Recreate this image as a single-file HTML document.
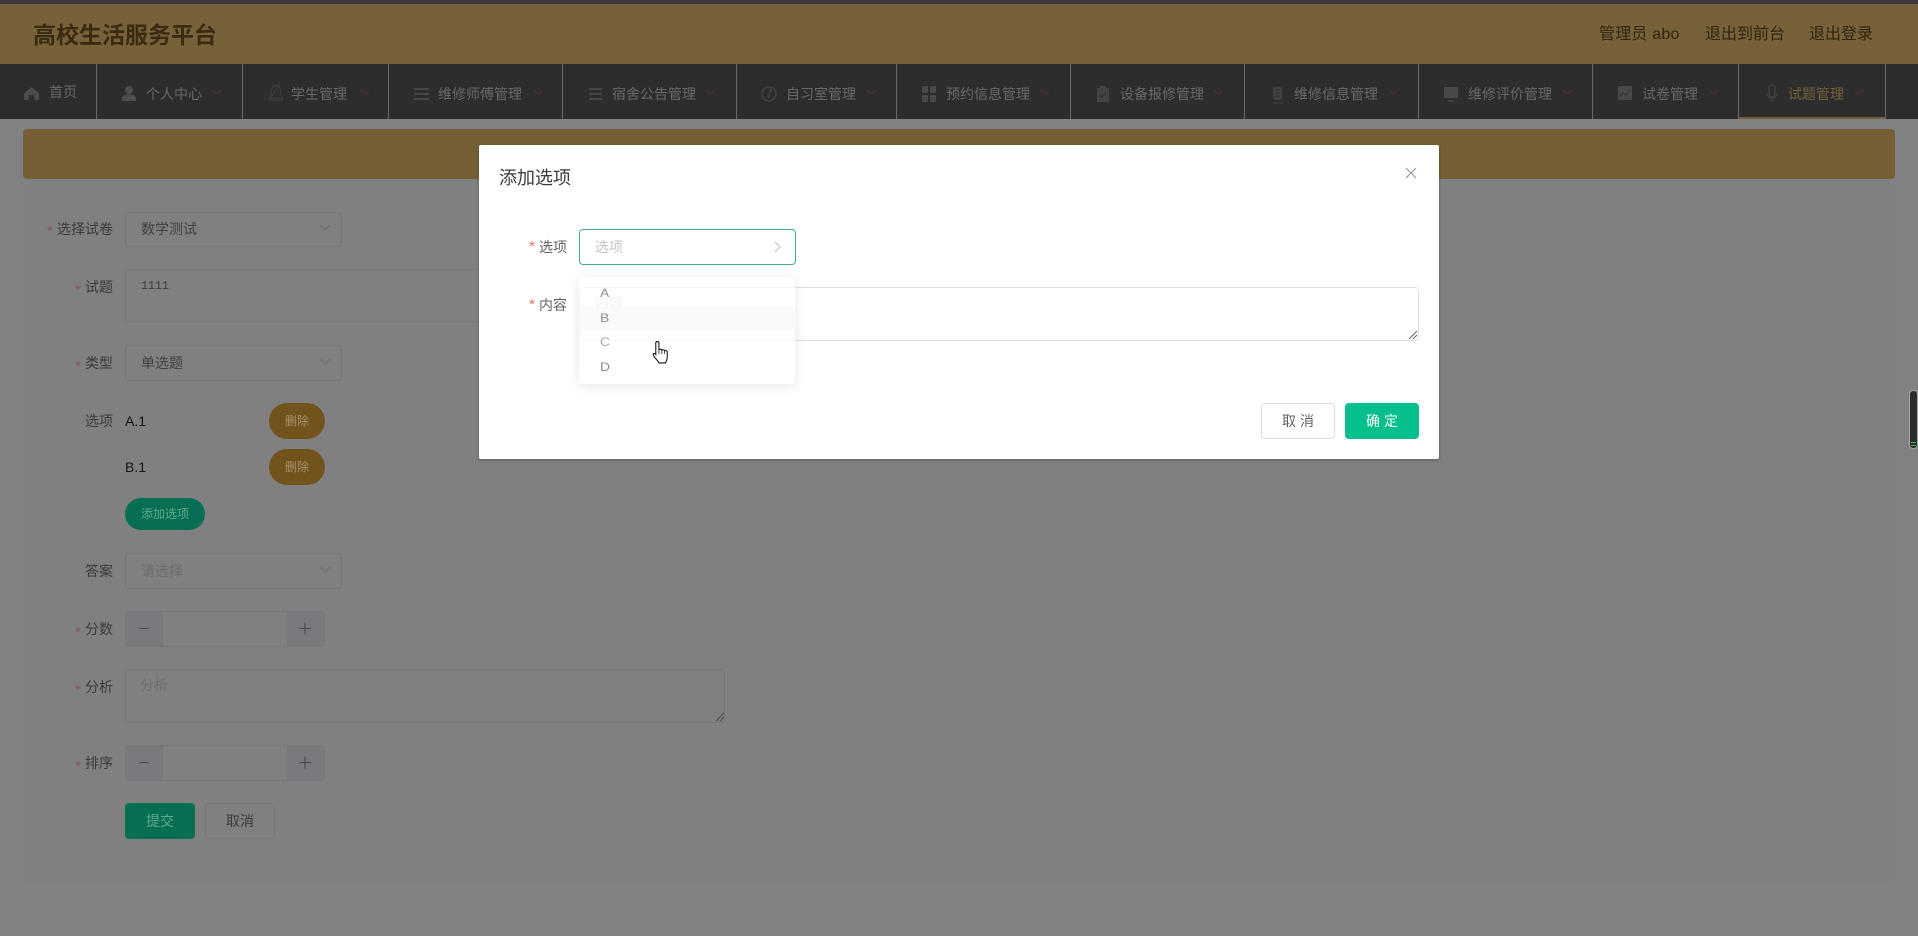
<!DOCTYPE html>
<html lang="zh">
<head>
<meta charset="utf-8">
<title>高校生活服务平台</title>
<style>
html,body{margin:0;padding:0;width:1918px;height:936px;overflow:hidden;background:#7f8182;}
body{position:relative;font-family:"Liberation Sans","Noto Sans CJK SC",sans-serif;font-size:14px;}
.a{position:absolute;box-sizing:border-box;}
.t{position:absolute;white-space:nowrap;line-height:20px;height:20px;}
.nt{color:#696969;font-size:14px;top:84px;}
.dv{position:absolute;top:64px;height:55px;width:1px;background:#696969;}
.lb{color:#3a3a3a;font-size:14px;text-align:right;width:100px;left:13px;}
.st{color:#8a5657;font-size:15px;}
.bx{position:absolute;box-sizing:border-box;border:1px solid #757779;border-radius:4px;}
.pad{position:absolute;box-sizing:border-box;background:#787a7d;}
</style>
</head>
<body>
<!-- top strip + header -->
<div class="a" style="left:0;top:0;width:1918px;height:4px;background:#3b383b;"></div>
<div class="a" style="left:0;top:4px;width:1918px;height:60px;background:#766138;"></div>
<div class="t" style="left:33px;top:20px;height:30px;line-height:30px;font-size:23px;font-weight:bold;color:#3a2c12;">高校生活服务平台</div>
<div class="t" style="left:1599px;top:25px;font-size:16px;color:#2f2511;letter-spacing:.2px;">管理员 abo</div>
<div class="t" style="left:1705px;top:25px;font-size:16px;color:#2f2511;">退出到前台</div>
<div class="t" style="left:1809px;top:25px;font-size:16px;color:#2f2511;">退出登录</div>

<!-- nav -->
<div class="a" style="left:0;top:64px;width:1918px;height:55px;background:#2e2d2e;"></div>
<div class="dv" style="left:96px"></div><div class="dv" style="left:242px"></div><div class="dv" style="left:388px"></div><div class="dv" style="left:562px"></div><div class="dv" style="left:736px"></div><div class="dv" style="left:896px"></div><div class="dv" style="left:1070px"></div><div class="dv" style="left:1244px"></div><div class="dv" style="left:1418px"></div><div class="dv" style="left:1592px"></div><div class="dv" style="left:1738px"></div><div class="dv" style="left:1885px"></div>
<div class="a" style="left:1738px;top:117px;width:147px;height:2px;background:#75603a;"></div>

<div class="t nt" style="left:49px;top:82px;">首页</div>
<div class="t nt" style="left:146px;">个人中心</div>
<div class="t nt" style="left:291px;">学生管理</div>
<div class="t nt" style="left:438px;">维修师傅管理</div>
<div class="t nt" style="left:612px;">宿舍公告管理</div>
<div class="t nt" style="left:786px;">自习室管理</div>
<div class="t nt" style="left:946px;">预约信息管理</div>
<div class="t nt" style="left:1120px;">设备报修管理</div>
<div class="t nt" style="left:1294px;">维修信息管理</div>
<div class="t nt" style="left:1468px;">维修评价管理</div>
<div class="t nt" style="left:1642px;">试卷管理</div>
<div class="t nt" style="left:1788px;color:#75603a;">试题管理</div>

<svg class="a" style="left:0;top:64px" width="1918" height="55" viewBox="0 64 1918 55">
  <g fill="none" stroke="#4f2c35" stroke-width="1.2">
    <path d="M212 90l4.500 4 4.500-4M360 90l4.500 4 4.500-4M534 90l4.500 4 4.500-4M706 90l4.500 4 4.500-4M867 90l4.500 4 4.500-4M1040 90l4.500 4 4.500-4M1214 90l4.500 4 4.500-4M1389 90l4.500 4 4.500-4M1563 90l4.500 4 4.500-4M1709 90l4.500 4 4.500-4M1855 90l4.500 4 4.500-4"/>
  </g>
  <!-- home -->
  <path d="M24 93.500l7.500-6.500 7.500 6.500v6.500h-5v-5h-5v5h-5z" fill="#4b4b4d"/>
  <!-- user -->
  <circle cx="129" cy="90" r="4" fill="#4d4d4e"/><path d="M122 101v-2.500c0-3 3-4 7-4s7 1 7 4v2.500z" fill="#4d4d4e"/>
  <!-- bell slash -->
  <g fill="none" stroke="#3f3f40" stroke-width="1"><path d="M269 98c3-3 2-5 3-9 1-3 3-4 4-4s3 1 4 4c1 4 0 6 3 9zM268 100h15M270 99l10-15"/></g>
  <!-- lists -->
  <g fill="none" stroke="#464647" stroke-width="2"><path d="M414 89h15M414 94h15M414 99h15M589 89h13M589 94h13M589 99h13"/></g>
  <!-- compass -->
  <circle cx="769" cy="94" r="7" fill="none" stroke="#454546" stroke-width="1.3"/><path d="M771 89l-3 9" stroke="#454546" stroke-width="1.4"/>
  <!-- grid -->
  <g fill="#48484a"><rect x="922" y="86" width="6" height="7"/><rect x="930" y="86" width="6" height="7"/><rect x="922" y="95" width="6" height="7"/><rect x="930" y="95" width="6" height="7"/></g>
  <!-- clipboard -->
  <path d="M1097 88h3v-2h6v2h3v14h-12z" fill="#434344"/><path d="M1100 95l2 2 4-4" fill="none" stroke="#2f2e2f" stroke-width="1.2"/>
  <!-- device -->
  <rect x="1273" y="87" width="9" height="13" rx="2" fill="#414142"/><path d="M1275 90h5M1275 93h5M1275 96h5" stroke="#2f2e2f"/><path d="M1273 103h9" stroke="#414142"/>
  <!-- monitor -->
  <rect x="1444" y="87" width="14" height="11" fill="#48484a"/><path d="M1448 101h6" stroke="#48484a" stroke-width="1.5"/>
  <!-- chart -->
  <rect x="1618" y="86" width="14" height="14" fill="#48484a"/><path d="M1620 96l3-3 3 2 4-4" fill="none" stroke="#2f2e2f"/>
  <!-- mic -->
  <rect x="1769" y="85" width="6" height="12" rx="3" fill="none" stroke="#464647" stroke-width="1.2"/><path d="M1767 93c0 7 10 7 10 0M1772 99v3" fill="none" stroke="#464647"/>
</svg>

<!-- page body -->
<div class="a" style="left:23px;top:129px;width:1872px;height:50px;background:#756036;border-radius:4px;"></div>
<div class="a" style="left:23px;top:186px;width:1872px;height:697px;background:#808080;"></div>

<!-- left form -->
<div class="t st" style="left:47px;top:222px;">*</div><div class="t lb" style="top:219px;">选择试卷</div>
<div class="bx" style="left:125px;top:212px;width:217px;height:35px;"></div>
<div class="t" style="left:141px;top:219px;color:#404040;">数学测试</div>

<div class="t st" style="left:75px;top:281px;color:#8a5657;">*</div><div class="t lb" style="top:277px;">试题</div>
<div class="bx" style="left:125px;top:269px;width:600px;height:53px;"></div>
<div class="t" style="left:141px;top:276px;color:#3f3f3f;font-family:'Liberation Mono',monospace;font-size:12px;letter-spacing:-.3px;">1111</div>

<div class="t st" style="left:75px;top:357px;">*</div><div class="t lb" style="top:353px;">类型</div>
<div class="bx" style="left:125px;top:345px;width:217px;height:36px;"></div>
<div class="t" style="left:141px;top:353px;color:#404040;">单选题</div>

<div class="t lb" style="top:411px;">选项</div>
<div class="t" style="left:125px;top:411px;color:#151515;">A.1</div>
<div class="a" style="left:269px;top:403px;width:56px;height:36px;border-radius:18px;background:#72531c;"></div>
<div class="t" style="left:285px;top:411px;color:#a3926f;font-size:12px;">删除</div>
<div class="t" style="left:125px;top:457px;color:#151515;">B.1</div>
<div class="a" style="left:269px;top:449px;width:56px;height:36px;border-radius:18px;background:#72531c;"></div>
<div class="t" style="left:285px;top:457px;color:#a3926f;font-size:12px;">删除</div>
<div class="a" style="left:125px;top:498px;width:80px;height:32px;border-radius:16px;background:#066f53;"></div>
<div class="t" style="left:141px;top:504px;color:#62a892;font-size:12px;">添加选项</div>

<div class="t lb" style="top:561px;">答案</div>
<div class="bx" style="left:125px;top:553px;width:217px;height:36px;"></div>
<div class="t" style="left:141px;top:561px;color:#6b6d6f;">请选择</div>

<div class="t st" style="left:75px;top:623px;">*</div><div class="t lb" style="top:619px;">分数</div>
<div class="bx" style="left:125px;top:611px;width:200px;height:36px;overflow:hidden;">
  <div class="pad" style="left:0;top:0;width:37px;height:34px;border-right:1px solid #757779;"></div>
  <div class="pad" style="right:0;top:0;width:37px;height:34px;border-left:1px solid #757779;"></div>
</div>

<div class="t st" style="left:75px;top:681px;">*</div><div class="t lb" style="top:677px;">分析</div>
<div class="bx" style="left:125px;top:669px;width:600px;height:54px;"></div>
<div class="t" style="left:140px;top:675px;color:#6b6d6f;">分析</div>

<div class="t st" style="left:75px;top:757px;">*</div><div class="t lb" style="top:753px;">排序</div>
<div class="bx" style="left:125px;top:745px;width:200px;height:36px;overflow:hidden;">
  <div class="pad" style="left:0;top:0;width:37px;height:34px;border-right:1px solid #757779;"></div>
  <div class="pad" style="right:0;top:0;width:37px;height:34px;border-left:1px solid #757779;"></div>
</div>

<div class="a" style="left:125px;top:803px;width:70px;height:36px;border-radius:4px;background:#066f53;"></div>
<div class="t" style="left:146px;top:811px;color:#62a892;">提交</div>
<div class="bx" style="left:205px;top:803px;width:70px;height:36px;"></div>
<div class="t" style="left:226px;top:811px;color:#3a3a3a;">取消</div>

<svg class="a" style="left:0;top:0" width="400" height="800" viewBox="0 0 400 800">
  <g fill="none" stroke="#6c6e70" stroke-width="1">
    <path d="M320 225l5 5 5-5M320 359l5 5 5-5M320 567l5 5 5-5"/>
  </g>
  <g fill="none" stroke="#4a4b4d" stroke-width="1.1">
    <path d="M139 628.500h10M299 628.500h12M305 622.500v12M139 762.500h10M299 762.500h12M305 756.500v12"/>
  </g>
</svg>
<svg class="a" style="left:715px;top:712px" width="10" height="10" viewBox="0 0 10 10"><path d="M1 9l8-8M5 9l4-4" stroke="#4a4a4a" fill="none"/></svg>

<!-- scrollbar -->
<div class="a" style="left:1909px;top:390px;width:9px;height:59px;background:#2b2b2b;border:1px solid #a5a5a5;border-radius:4px;"></div>
<div class="a" style="left:1911px;top:442px;width:5px;height:1px;background:#3fbf5f;"></div>
<div class="a" style="left:1911px;top:445px;width:5px;height:1px;background:#3fbf5f;"></div>

<!-- modal -->
<div class="a" style="left:479px;top:145px;width:960px;height:314px;background:#fff;border-radius:2px;box-shadow:0 1px 3px rgba(0,0,0,.3);"></div>
<div class="t" style="left:499px;top:168px;font-size:18px;color:#3a3b3d;">添加选项</div>
<svg class="a" style="left:1405px;top:167px" width="12" height="12" viewBox="0 0 12 12"><path d="M1 1l10 10M11 1L1 11" stroke="#8d9096" fill="none" stroke-width="1"/></svg>

<div class="t" style="left:529px;top:237px;color:#f56c6c;font-size:15px;">*</div>
<div class="t" style="left:539px;top:237px;color:#606266;">选项</div>
<div class="a" style="left:579px;top:229px;width:217px;height:36px;border:1px solid #3ab297;border-radius:4px;background:#fff;"></div>
<div class="t" style="left:595px;top:237px;color:#c0c4cc;">选项</div>
<svg class="a" style="left:773px;top:241px" width="10" height="12" viewBox="0 0 10 12"><path d="M2 1l5 5-5 5" stroke="#c0c4cc" fill="none" stroke-width="1.2"/></svg>

<div class="t" style="left:529px;top:295px;color:#f56c6c;font-size:15px;">*</div>
<div class="t" style="left:539px;top:295px;color:#606266;">内容</div>
<div class="a" style="left:579px;top:287px;width:840px;height:54px;border:1px solid #dcdfe6;border-radius:4px;background:#fff;"></div>
<div class="t" style="left:595px;top:293px;color:#c0c4cc;">内容</div>
<svg class="a" style="left:1408px;top:330px" width="10" height="10" viewBox="0 0 10 10"><path d="M1 9l8-8M5 9l4-4" stroke="#666" fill="none"/></svg>

<!-- dropdown -->
<div class="a" style="left:579px;top:277px;width:216px;height:107px;background:rgba(255,255,255,.75);border-radius:4px;box-shadow:0 2px 12px rgba(0,0,0,.1);"></div>
<div class="a" style="left:579px;top:307px;width:216px;height:24px;background:#f5f7fa;opacity:.65;"></div>
<div class="t" style="left:600px;top:283px;font-size:12px;color:#8b8d91;transform:scaleX(1.15);transform-origin:left;">A</div>
<div class="t" style="left:600px;top:308px;font-size:12px;color:#8b8d91;transform:scaleX(1.15);transform-origin:left;">B</div>
<div class="t" style="left:600px;top:332px;font-size:12px;color:#a5a7ab;transform:scaleX(1.15);transform-origin:left;">C</div>
<div class="t" style="left:600px;top:357px;font-size:12px;color:#8b8d91;transform:scaleX(1.15);transform-origin:left;">D</div>

<!-- hand cursor -->
<svg class="a" style="left:652px;top:340px" width="18" height="24" viewBox="0 0 17 23">
  <path d="M5 1.500c.9 0 1.500.6 1.500 1.500v6.500c.3-.8 2.500-.8 2.800.3.4-.7 2.400-.6 2.700.5.500-.5 2.500-.3 2.500 1.500v4.700c0 2.500-1 3.500-1.600 5.500H6.500c-.6-1.500-2-3-3.500-4.600C2 16 .8 14.500 1 13.600c.3-1 1.800-1 2.500.2V3c0-.9.6-1.500 1.500-1.500z" fill="#fff" stroke="#111" stroke-width="1"/>
  <path d="M6.500 9.500v4M9.300 9.800v3.700M12 10.300v3.200" stroke="#111" stroke-width=".7" fill="none"/>
</svg>

<!-- dialog footer -->
<div class="a" style="left:1261px;top:403px;width:74px;height:36px;border:1px solid #dcdfe6;border-radius:4px;background:#fff;"></div>
<div class="t" style="left:1282px;top:411px;color:#606266;letter-spacing:4px;">取消</div>
<div class="a" style="left:1345px;top:403px;width:74px;height:36px;border-radius:4px;background:#05bf8d;"></div>
<div class="t" style="left:1366px;top:411px;color:#fff;letter-spacing:4px;">确定</div>
</body>
</html>
